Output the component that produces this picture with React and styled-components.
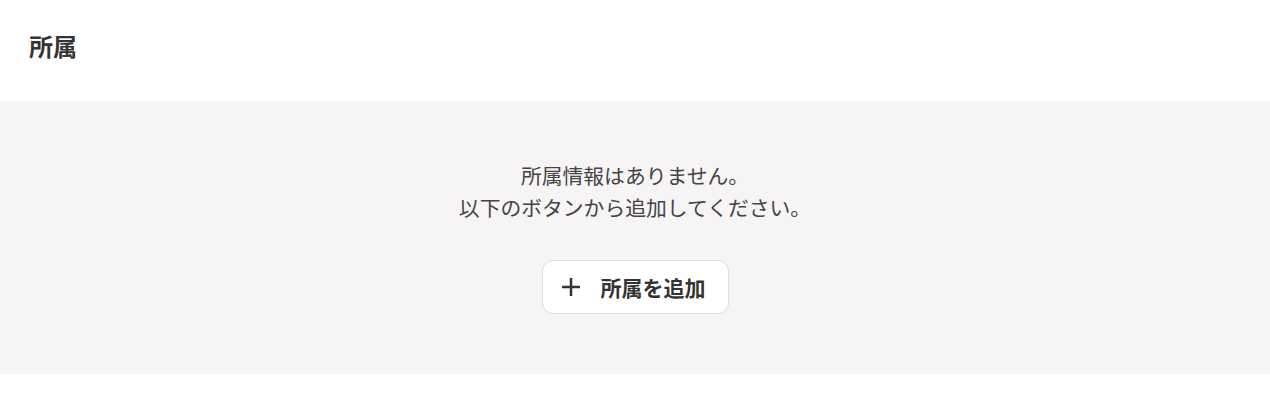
import React from "react";
import styled, { createGlobalStyle } from "styled-components";

const GlobalStyle = createGlobalStyle`
  body {
    margin: 0;
    background: #ffffff;
    font-family: "Noto Sans CJK JP", "Noto Sans", sans-serif;
    color: #333333;
  }
`;

const Section = styled.section`
  width: 100%;
`;

const Header = styled.div`
  height: 101px;
  display: flex;
  align-items: center;
  padding: 0 29px;
  box-sizing: border-box;

  h2 {
    margin: 0 0 10px;
    font-size: 24px;
    font-weight: 700;
    color: #333333;
  }
`;

const EmptyState = styled.div`
  background-color: #f6f4f5;
  height: 273px;
  box-sizing: border-box;
  padding-top: 58px;
  display: flex;
  flex-direction: column;
  align-items: center;
`;

const Message = styled.p`
  margin: 0;
  font-size: 20.8px;
  line-height: 32px;
  color: #444444;
  text-align: center;
`;

const AddButton = styled.button`
  margin-top: 37px;
  height: 54px;
  display: flex;
  align-items: center;
  gap: 21px;
  padding: 0 22px 0 19px;
  background-color: #ffffff;
  border: 1px solid #dddddd;
  border-radius: 11px;
  font-family: inherit;
  font-size: 21px;
  font-weight: 700;
  color: #333333;
  cursor: pointer;
`;

const PlusIcon = () => (
  <svg width="18" height="18" viewBox="0 0 18 18" fill="none">
    <path d="M9 0v18M0 9h18" stroke="#333333" strokeWidth="2.5" />
  </svg>
);

const App = () => {
  return (
    <>
      <GlobalStyle />
      <Section>
        <Header>
          <h2>所属</h2>
        </Header>
        <EmptyState>
          <Message>
            所属情報はありません。
            <br />
            以下のボタンから追加してください。
          </Message>
          <AddButton type="button">
            <PlusIcon />
            所属を追加
          </AddButton>
        </EmptyState>
      </Section>
    </>
  );
};

export default App;
